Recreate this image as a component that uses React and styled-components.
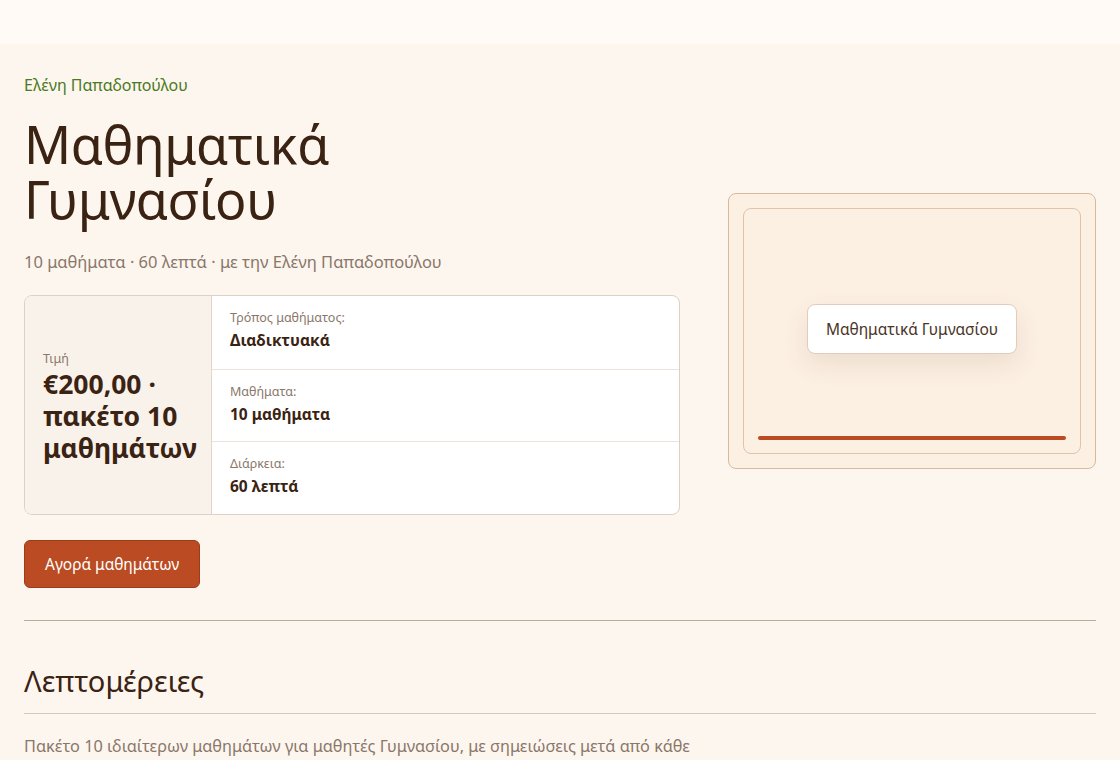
import React from "react";
import styled, { createGlobalStyle } from "styled-components";

const Global = createGlobalStyle`
  html, body { margin: 0; padding: 0; background: #fdf6ef; }
  body { font-family: "Noto Sans", "DejaVu Sans", sans-serif; color: #3b2313; }
  * { box-sizing: border-box; }
`;

const TopBar = styled.header`
  height: 44px;
  background: #fffaf6;
`;

const Main = styled.main`
  padding: 30px 24px 0;
`;

const Hero = styled.section`
  display: grid;
  grid-template-columns: 656px 1fr;
  column-gap: 48px;
  align-items: center;
  padding-bottom: 32px;
  border-bottom: 1px solid #b9ac9c;
`;

const Left = styled.div`
  display: flex;
  flex-direction: column;
  align-items: flex-start;
`;

const Teacher = styled.div`
  font-size: 16px;
  line-height: 22px;
  color: #4b7a22;
`;

const Title = styled.h1`
  margin: 20px 0 0;
  font-size: 52px;
  line-height: 55px;
  font-weight: 400;
  color: #3b2313;
  letter-spacing: -0.3px;
`;

const Meta = styled.p`
  margin: 25px 0 0;
  font-size: 16.5px;
  line-height: 22px;
  color: #8a776a;
`;

const InfoBox = styled.div`
  margin-top: 22px;
  width: 100%;
  display: grid;
  grid-template-columns: 187px 1fr;
  border: 1px solid #ddd0c4;
  border-radius: 8px;
  overflow: hidden;
  background: #ffffff;
`;

const PriceCell = styled.div`
  background: #f9f2eb;
  border-right: 1px solid #e2d6cb;
  padding: 4px 8px 0 18px;
  display: flex;
  flex-direction: column;
  justify-content: center;
`;

const PriceLabel = styled.div`
  font-size: 12.5px;
  line-height: 18px;
  color: #8a776a;
`;

const PriceValue = styled.div`
  font-size: 26.5px;
  line-height: 32px;
  font-weight: 700;
  color: #3b2313;
`;

const Rows = styled.div`
  display: flex;
  flex-direction: column;
`;

const Row = styled.div`
  height: 72.5px;
  padding: 13px 18px 0;
  border-top: ${(p) => (p.$first ? "none" : "1px solid #ebe3dc")};
`;

const RowLabel = styled.div`
  font-size: 12.5px;
  line-height: 18px;
  color: #8a776a;
`;

const RowValue = styled.div`
  margin-top: 3px;
  font-size: 15.5px;
  line-height: 20px;
  font-weight: 700;
  color: #3b2313;
`;

const BuyButton = styled.button`
  margin-top: 25px;
  height: 48px;
  padding: 0 20px;
  background: #ba4b22;
  color: #ffffff;
  border: 1px solid #9c3c19;
  border-radius: 6px;
  font-family: inherit;
  font-size: 15.5px;
  cursor: pointer;
`;

const Preview = styled.div`
  height: 276px;
  padding: 14px;
  border: 1px solid #d7b99e;
  border-radius: 8px;
  background: #fcf0e3;
`;

const PreviewInner = styled.div`
  height: 100%;
  border: 1px solid #dfc3ab;
  border-radius: 8px;
  display: flex;
  flex-direction: column;
  padding: 0 14px 13px;
`;

const Stage = styled.div`
  flex: 1;
  display: flex;
  align-items: center;
  justify-content: center;
  padding-top: 14px;
`;

const Chip = styled.div`
  height: 50px;
  padding: 0 18px;
  display: flex;
  align-items: center;
  background: #ffffff;
  border: 1px solid #e0cdbd;
  border-radius: 8px;
  box-shadow: 0 10px 24px rgba(120, 80, 40, 0.12);
  font-size: 15.5px;
  color: #4a3528;
`;

const Progress = styled.div`
  height: 4px;
  border-radius: 2px;
  background: #ba4b22;
`;

const Details = styled.section`
  padding-top: 42px;
`;

const DetailsTitle = styled.h2`
  margin: 0;
  padding-bottom: 14px;
  font-size: 29px;
  line-height: 36px;
  font-weight: 400;
  color: #3b2313;
  border-bottom: 1px solid #d8c9bd;
`;

const DetailsText = styled.p`
  margin: 20px 0 0;
  max-width: 700px;
  font-size: 16.3px;
  line-height: 24px;
  color: #8a776a;
`;

export default function App() {
  return (
    <>
      <Global />
      <TopBar />
      <Main>
        <Hero>
          <Left>
            <Teacher>Ελένη Παπαδοπούλου</Teacher>
            <Title>
              Μαθηματικά
              <br />
              Γυμνασίου
            </Title>
            <Meta>10 μαθήματα · 60 λεπτά · με την Ελένη Παπαδοπούλου</Meta>
            <InfoBox>
              <PriceCell>
                <PriceLabel>Τιμή</PriceLabel>
                <PriceValue>€200,00 · πακέτο 10 μαθημάτων</PriceValue>
              </PriceCell>
              <Rows>
                <Row $first>
                  <RowLabel>Τρόπος μαθήματος:</RowLabel>
                  <RowValue>Διαδικτυακά</RowValue>
                </Row>
                <Row>
                  <RowLabel>Μαθήματα:</RowLabel>
                  <RowValue>10 μαθήματα</RowValue>
                </Row>
                <Row>
                  <RowLabel>Διάρκεια:</RowLabel>
                  <RowValue>60 λεπτά</RowValue>
                </Row>
              </Rows>
            </InfoBox>
            <BuyButton>Αγορά μαθημάτων</BuyButton>
          </Left>
          <Preview>
            <PreviewInner>
              <Stage>
                <Chip>Μαθηματικά Γυμνασίου</Chip>
              </Stage>
              <Progress />
            </PreviewInner>
          </Preview>
        </Hero>
        <Details>
          <DetailsTitle>Λεπτομέρειες</DetailsTitle>
          <DetailsText>
            Πακέτο 10 ιδιαίτερων μαθημάτων για μαθητές Γυμνασίου, με σημειώσεις μετά από κάθε
            μάθημα.
          </DetailsText>
        </Details>
      </Main>
    </>
  );
}
